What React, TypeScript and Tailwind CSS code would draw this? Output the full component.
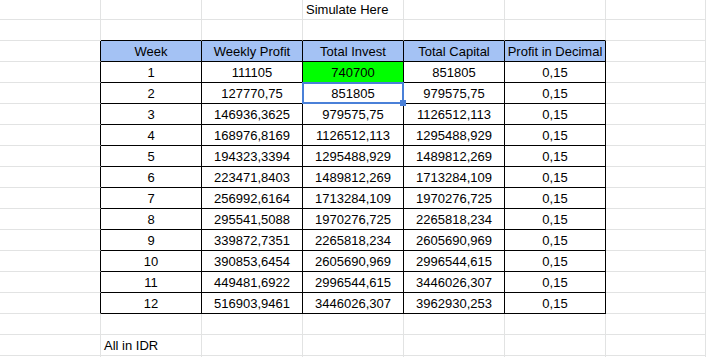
const rows: string[][] = [
  ["1", "111105", "740700", "851805", "0,15"],
  ["2", "127770,75", "851805", "979575,75", "0,15"],
  ["3", "146936,3625", "979575,75", "1126512,113", "0,15"],
  ["4", "168976,8169", "1126512,113", "1295488,929", "0,15"],
  ["5", "194323,3394", "1295488,929", "1489812,269", "0,15"],
  ["6", "223471,8403", "1489812,269", "1713284,109", "0,15"],
  ["7", "256992,6164", "1713284,109", "1970276,725", "0,15"],
  ["8", "295541,5088", "1970276,725", "2265818,234", "0,15"],
  ["9", "339872,7351", "2265818,234", "2605690,969", "0,15"],
  ["10", "390853,6454", "2605690,969", "2996544,615", "0,15"],
  ["11", "449481,6922", "2996544,615", "3446026,307", "0,15"],
  ["12", "516903,9461", "3446026,307", "3962930,253", "0,15"],
];

const headers = ["Week", "Weekly Profit", "Total Invest", "Total Capital", "Profit in Decimal"];

// plain grid cell, gray lines
function Cell({ children, last }: { children?: React.ReactNode; last?: boolean }) {
  return (
    <div
      className={
        "flex h-full items-end border-b border-r border-[#e2e3e3] px-[3px] leading-[18px] " +
        (last ? "flex-1" : "w-[101px] shrink-0")
      }
    >
      {children}
    </div>
  );
}

// empty sheet row: 7 columns
function BlankRow({ h = "h-[21px]", children }: { h?: string; children?: React.ReactNode[] }) {
  const c = children ?? [];
  return (
    <div className={"flex " + h}>
      <Cell>{c[0]}</Cell>
      <Cell>{c[1]}</Cell>
      <Cell>{c[2]}</Cell>
      <Cell>{c[3]}</Cell>
      <Cell>{c[4]}</Cell>
      <Cell>{c[5]}</Cell>
      <Cell last>{c[6]}</Cell>
    </div>
  );
}

export default function App() {
  return (
    <div className="relative h-[357px] w-[706px] overflow-hidden bg-white font-['Liberation_Sans',Arial,sans-serif] text-[13px] text-black">
      <BlankRow h="h-[20px]">{[null, null, null, "Simulate Here"]}</BlankRow>

      {/* row above the table: its bottom line is the table top */}
      <div className="flex h-[21px]">
        <Cell />
        {[0, 1, 2, 3, 4].map((i) => (
          <div
            key={i}
            className="h-full w-[101px] shrink-0 border-b border-r border-b-black border-r-[#e2e3e3]"
          />
        ))}
        <Cell last />
      </div>

      {/* header */}
      <div className="flex h-[21px]">
        <div className="h-full w-[101px] shrink-0 border-b border-r border-b-[#e2e3e3] border-r-black" />
        {headers.map((h) => (
          <div
            key={h}
            className="flex h-full w-[101px] shrink-0 items-end justify-center whitespace-nowrap border-b border-r border-black bg-[#a4c2f4] leading-[18px]"
          >
            {h}
          </div>
        ))}
        <Cell last />
      </div>

      {rows.map((r, ri) => (
        <div key={ri} className="flex h-[21px]">
          <div className="h-full w-[101px] shrink-0 border-b border-r border-b-[#e2e3e3] border-r-black" />
          {r.map((v, ci) => (
            <div
              key={ci}
              className={
                "relative flex h-full w-[101px] shrink-0 items-end justify-center border-b border-r border-black leading-[18px] " +
                (ri === 0 && ci === 2 ? "bg-[#00ff00]" : "")
              }
            >
              {v}
              {ri === 1 && ci === 2 && (
                <>
                  <div className="pointer-events-none absolute -left-px -top-px z-10 h-[22px] w-[102px] border-2 border-[#4a80d8]" />
                  <div className="absolute left-[97px] top-[17px] z-20 h-[6px] w-[6px] bg-[#4a80d8]" />
                </>
              )}
            </div>
          ))}
          <Cell last />
        </div>
      ))}

      <BlankRow />
      <BlankRow>{[null, "All in IDR"]}</BlankRow>
      <BlankRow />
    </div>
  );
}
